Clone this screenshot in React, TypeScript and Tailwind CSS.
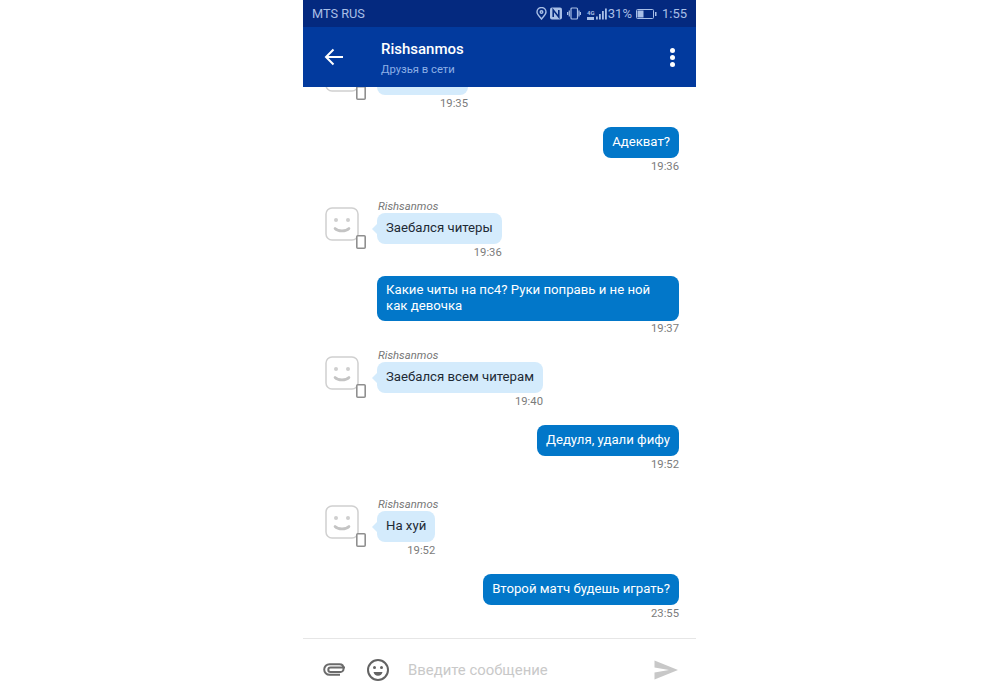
import React from 'react'

const Avatar = () => (
  <svg width="42" height="44" viewBox="0 0 42 44" fill="none" className="shrink-0">
    <rect x="1" y="1" width="32" height="32" rx="6" fill="#fff" stroke="#d0d0d0" strokeWidth="1.500" />
    <circle cx="11" cy="13" r="2" fill="#cfcfcf" />
    <circle cx="23" cy="13" r="2" fill="#cfcfcf" />
    <path d="M10 21.500c3 3.200 11 3.200 14 0" stroke="#c4c4c4" strokeWidth="2.600" strokeLinecap="round" />
    <rect x="31.800" y="28.800" width="8.400" height="12.400" rx="1" fill="#fff" stroke="#8f8f8f" strokeWidth="1.600" />
  </svg>
)

// text is left out for the row that is scrolled under the header
const Incoming = ({ text, time, mt, bubbleW }: { text?: string; time: string; mt: string; bubbleW?: string }) => (
  <div className={`flex pl-[22px] ${mt}`}>
    <div className="pt-[7px] mr-[10px]"><Avatar /></div>
    <div className="flex flex-col items-start">
      <div className="h-[13px] pl-[1px] text-[11.300px] leading-[13px] italic text-[#777]">{text ? 'Rishsanmos' : ''}</div>
      <div className="inline-flex flex-col items-end">
        <div className={`relative bg-[#d4ebfc] rounded-[8px] px-[9px] pb-[2px] h-[31px] flex items-center text-[13.200px] text-[#1e2a35] ${bubbleW ?? ''}`}>
          <span className="absolute left-[-5px] top-[11px] w-0 h-0 border-y-[5px] border-y-transparent border-r-[5px] border-r-[#d4ebfc]" />
          {text}
        </div>
        <div className="mt-[2px] text-[11.250px] leading-[14px] text-[#7b7b7b]">{time}</div>
      </div>
    </div>
  </div>
)

const Outgoing = ({ lines, time, mt, wide }: { lines: string[]; time: string; mt: string; wide?: boolean }) => (
  <div className={`flex flex-col items-end pr-[17px] ${mt}`}>
    <div className={`bg-[#0277c9] rounded-[8px] px-[9px] pb-[2px] text-[13.200px] text-white flex flex-col justify-center ${wide ? 'w-[302px] h-[45px] leading-[16px]' : 'h-[31px]'}`}>
      {lines.map((l) => <div key={l}>{l}</div>)}
    </div>
    <div className={`text-[11.250px] leading-[14px] text-[#7b7b7b] ${wide ? 'mt-[1px]' : 'mt-[2px]'}`}>{time}</div>
  </div>
)

const StatusIcons = () => (
  <div className="flex items-center text-[#a9bfe6]">
    {/* location */}
    <svg width="11" height="13" viewBox="0 0 11 13" fill="none" stroke="currentColor" strokeWidth="1.400">
      <path d="M5.500 12C3 9 1 7.300 1 5a4.500 4.500 0 0 1 9 0C10 7.300 8 9 5.500 12Z" />
      <circle cx="5.500" cy="5" r="1.300" />
    </svg>
    {/* nfc */}
    <svg width="12" height="13" viewBox="0 0 12 13" fill="none" className="ml-[3px]">
      <rect x="0" y="0.500" width="12" height="12" rx="2" fill="currentColor" />
      <path d="M3.200 10V3l5.600 7V3" stroke="#04297f" strokeWidth="1.600" />
    </svg>
    {/* vibrate */}
    <svg width="14" height="13" viewBox="0 0 14 13" fill="none" stroke="currentColor" strokeWidth="1.200" className="ml-[5px]">
      <rect x="4" y="1" width="6.500" height="11" rx="1" />
      <path d="M2.300 3.500v6M0.600 5v3M12 3.500v6M13.500 5v3" />
    </svg>
    {/* network type + signal */}
    <div className="ml-[6px] flex items-end gap-[1px]">
      <div className="flex flex-col items-center w-[8px]">
        <span className="text-[6px] leading-[6px] font-bold">4G</span>
        <span className="mt-[1px] w-[7px] h-[3px] bg-current" />
      </div>
      <svg width="11" height="12" viewBox="0 0 11 12" fill="currentColor">
        <rect x="0" y="8.500" width="1.800" height="3" />
        <rect x="3" y="6" width="1.800" height="5.500" />
        <rect x="6" y="3" width="1.800" height="8.500" />
        <rect x="9" y="0.500" width="1.800" height="11" />
      </svg>
    </div>
    <span className="text-[13px] ml-[1px]">31%</span>
    {/* battery */}
    <svg width="21" height="10" viewBox="0 0 21 10" fill="none" className="ml-[4px]">
      <rect x="0.500" y="0.500" width="17" height="9" rx="1" stroke="currentColor" />
      <rect x="1.500" y="1.500" width="6" height="7" fill="currentColor" />
      <rect x="19" y="3" width="1.500" height="4" fill="currentColor" />
    </svg>
    <span className="text-[13px] ml-[5px]">1:55</span>
  </div>
)

export default function App() {
  return (
    <div className="h-[700px] bg-white flex justify-center overflow-hidden font-['Roboto',sans-serif]">
      <div className="w-[393px] mr-[1px] h-full flex flex-col">
        {/* status bar */}
        <div className="h-[27px] bg-[#04297f] flex items-center justify-between pl-[9px] pr-[9px] shrink-0">
          <span className="text-[12.750px] text-[#a9bfe6]">MTS RUS</span>
          <StatusIcons />
        </div>
        {/* header */}
        <div className="h-[60px] bg-[#023a9e] flex items-center relative z-10 shrink-0 pl-[21px] pr-[21px]">
          <svg width="20" height="20" viewBox="0 0 20 20" fill="none" stroke="#fff" strokeWidth="2" className="mt-[-1px]">
            <path d="M19 10H2M9.500 2.500 2 10l7.500 7.500" />
          </svg>
          <div className="ml-[37px] flex-1 mt-[2px]">
            <div className="text-[15px] leading-[18px] font-medium text-white">Rishsanmos</div>
            <div className="mt-[5px] text-[11.250px] leading-[14px] text-[#8db0e6]">Друзья в сети</div>
          </div>
          <div className="flex flex-col gap-[2px] mt-[1px]">
            <span className="w-[5px] h-[5px] rounded-full bg-white" />
            <span className="w-[5px] h-[5px] rounded-full bg-white" />
            <span className="w-[5px] h-[5px] rounded-full bg-white" />
          </div>
        </div>
        {/* messages */}
        <div className="flex-1 overflow-hidden flex flex-col">
          <Incoming time="19:35" mt="mt-[-36px]" bubbleW="w-[91px]" />
          <Outgoing lines={['Адекват?']} time="19:36" mt="mt-[16px]" />
          <Incoming text="Заебался читеры" time="19:36" mt="mt-[26px]" />
          <Outgoing lines={['Какие читы на пс4? Руки поправь и не ной', 'как девочка']} time="19:37" mt="mt-[16px]" wide />
          <Incoming text="Заебался всем читерам" time="19:40" mt="mt-[13px]" />
          <Outgoing lines={['Дедуля, удали фифу']} time="19:52" mt="mt-[16px]" />
          <Incoming text="На хуй" time="19:52" mt="mt-[26px]" />
          <Outgoing lines={['Второй матч будешь играть?']} time="23:55" mt="mt-[16px]" />
        </div>
        {/* input */}
        <div className="h-[62px] border-t border-[#e6e6e6] flex items-center shrink-0 pl-[20px] pr-[18px]">
          <svg width="23" height="13" viewBox="0 0 23 13" fill="none" stroke="#6b6b6b" strokeWidth="2">
            <path d="M22 4.500H7.500a2.200 2.200 0 0 0 0 4.400H17a3 3 0 0 0 3.500-3.400C20.500 3 19 1.200 16.500 1.200H6.500a5.300 5.300 0 0 0 0 10.600H17" />
          </svg>
          <svg width="24" height="24" viewBox="0 0 24 24" fill="none" className="ml-[20px]">
            <circle cx="12" cy="12" r="10" stroke="#636363" strokeWidth="2" />
            <circle cx="8.500" cy="9.500" r="1.500" fill="#636363" />
            <circle cx="15.500" cy="9.500" r="1.500" fill="#636363" />
            <path d="M7.500 14h9a4.600 4.600 0 0 1-9 0Z" fill="#636363" />
          </svg>
          <div className="ml-[18px] flex-1 mt-[2px] text-[14.900px] text-[#c9c9c9]">Введите сообщение</div>
          <svg width="24" height="20" viewBox="0 0 24 20" fill="#c8c8c8">
            <path d="M0.500 0.500 24 10 0.500 19.500V12.500L15 10 0.500 7.500Z" />
          </svg>
        </div>
      </div>
    </div>
  )
}
